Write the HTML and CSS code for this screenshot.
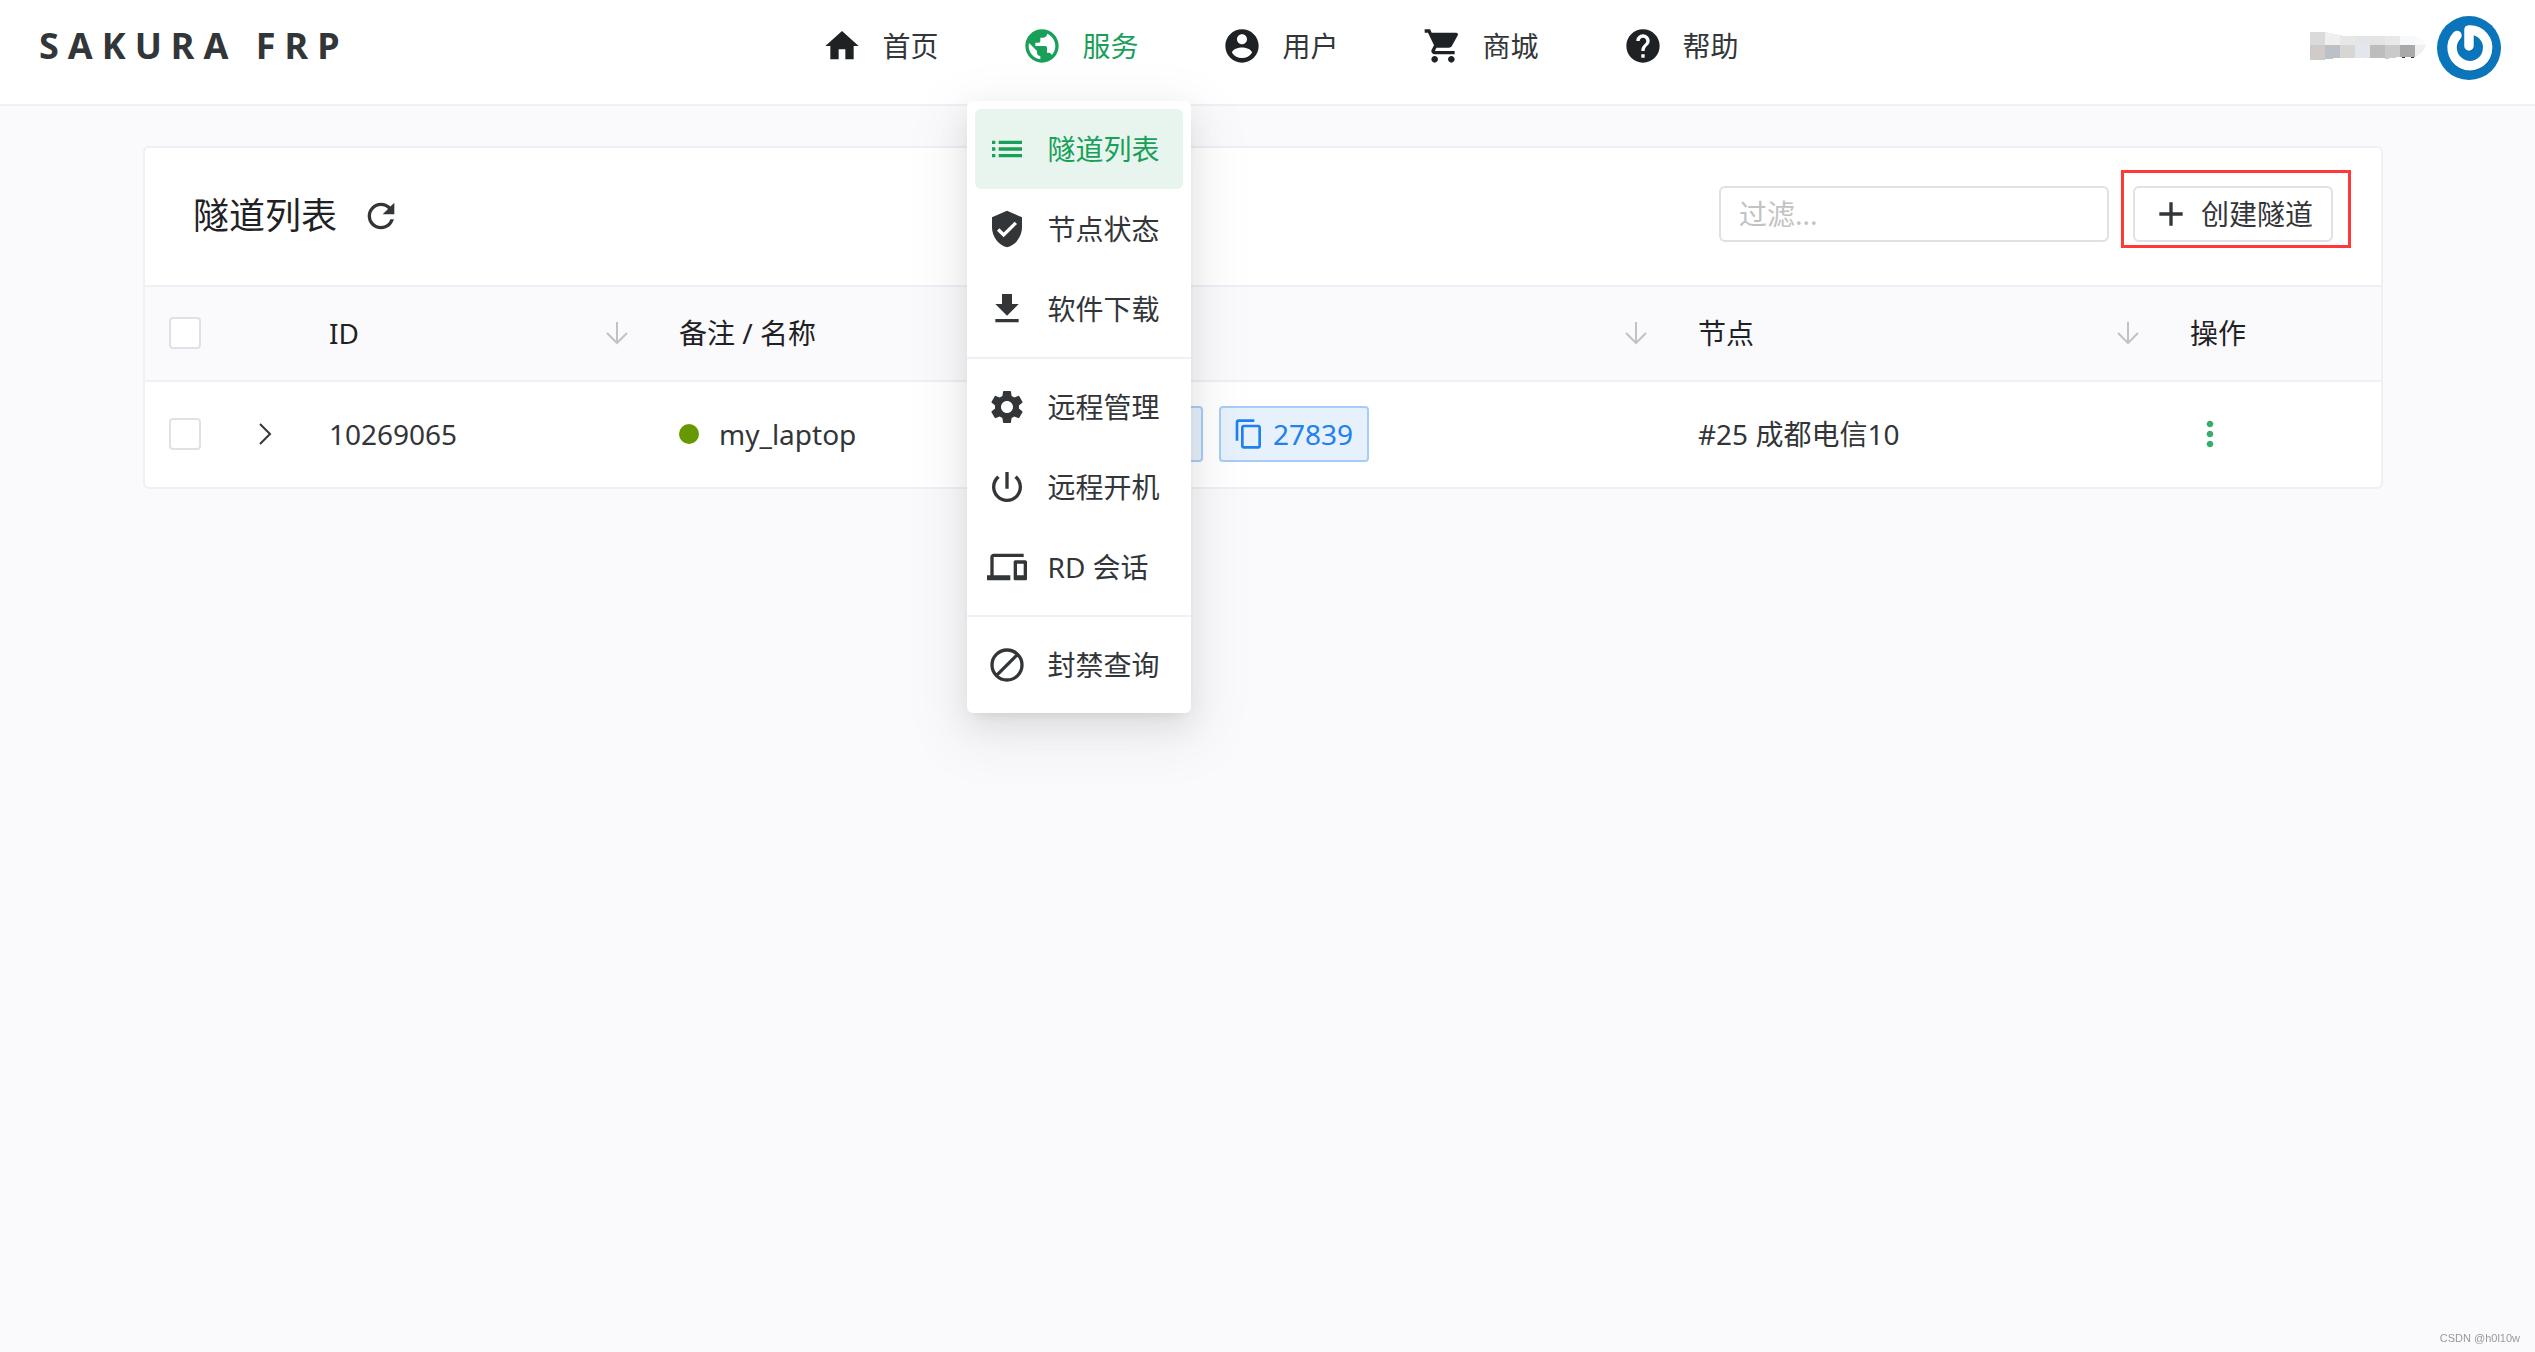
FILE: index.html
```html
<!DOCTYPE html>
<html lang="zh-CN">
<head>
<meta charset="utf-8">
<title>SAKURA FRP</title>
<link rel="stylesheet" href="styles.css">
</head>
<body>
<header class="topbar">
  <a class="brand" href="#">SAKURA FRP</a>
  <nav class="nav">
    <div class="nav-item">
      <a class="nav-link" href="#"><svg class="icon" viewBox="0 0 24 24"><path d="M10 20v-6h4v6h5v-8h3L12 3 2 12h3v8z"/></svg>首页</a>
    </div>
    <div class="nav-item">
      <a class="nav-link active" href="#"><svg class="icon" viewBox="0 0 24 24"><path d="M12 2C6.48 2 2 6.48 2 12s4.48 10 10 10 10-4.48 10-10S17.52 2 12 2zm-1 17.93c-3.95-.49-7-3.85-7-7.93 0-.62.08-1.21.21-1.79L9 15v1c0 1.100.9 2 2 2v1.930zm6.900-2.540c-.26-.81-1-1.390-1.900-1.390h-1v-3c0-.55-.45-1-1-1H8v-2h2c.55 0 1-.45 1-1V7h2c1.100 0 2-.9 2-2v-.41c2.930 1.190 5 4.060 5 7.410 0 2.080-.8 3.970-2.100 5.390z"/></svg>服务</a>
      <div class="menu">
        <a class="menu-item selected" href="#"><svg class="icon" viewBox="0 0 24 24"><path d="M3 13h2v-2H3v2zm0 4h2v-2H3v2zm0-8h2V7H3v2zm4 4h14v-2H7v2zm0 4h14v-2H7v2zM7 7v2h14V7H7z"/></svg>隧道列表</a>
        <a class="menu-item" href="#"><svg class="icon" viewBox="0 0 24 24"><path d="M12 1L3 5v6c0 5.550 3.840 10.740 9 12 5.160-1.260 9-6.450 9-12V5l-9-4zm-2 16l-4-4 1.410-1.410L10 14.170l6.590-6.590L18 9l-8 8z"/></svg>节点状态</a>
        <a class="menu-item" href="#"><svg class="icon" viewBox="0 0 24 24"><path d="M19 9h-4V3H9v6H5l7 7 7-7zM5 18v2h14v-2H5z"/></svg>软件下载</a>
        <hr class="menu-divider">
        <a class="menu-item" href="#"><svg class="icon" viewBox="0 0 24 24"><path d="M19.140 12.940c.04-.3.060-.61.060-.94 0-.32-.02-.64-.07-.94l2.030-1.580c.18-.14.230-.41.120-.61l-1.920-3.320c-.12-.22-.37-.29-.59-.22l-2.390.96c-.5-.38-1.030-.7-1.620-.94l-.36-2.540c-.04-.24-.24-.41-.48-.41h-3.840c-.24 0-.43.17-.47.41l-.36 2.540c-.59.24-1.130.57-1.620.94l-2.390-.96c-.22-.08-.47 0-.59.22L2.740 8.870c-.12.21-.08.47.12.61l2.030 1.580c-.05.3-.09.63-.09.94s.02.64.07.94l-2.030 1.580c-.18.14-.23.41-.12.61l1.920 3.320c.12.22.37.29.59.22l2.390-.96c.5.38 1.030.7 1.620.94l.36 2.540c.05.24.24.41.48.41h3.840c.24 0 .44-.17.47-.41l.36-2.540c.59-.24 1.130-.56 1.620-.94l2.390.96c.22.08.47 0 .59-.22l1.920-3.320c.12-.22.07-.47-.12-.61l-2.010-1.580zM12 15.600c-1.980 0-3.600-1.620-3.600-3.600s1.620-3.600 3.600-3.600 3.600 1.620 3.600 3.600-1.620 3.600-3.600 3.600z"/></svg>远程管理</a>
        <a class="menu-item" href="#"><svg class="icon" viewBox="0 0 24 24"><path d="M13 3h-2v10h2V3zm4.830 2.170l-1.420 1.420C17.990 7.860 19 9.810 19 12c0 3.870-3.130 7-7 7s-7-3.130-7-7c0-2.190 1.010-4.140 2.580-5.420L6.170 5.170C4.230 6.820 3 9.260 3 12c0 4.970 4.030 9 9 9s9-4.030 9-9c0-2.740-1.230-5.180-3.170-6.830z"/></svg>远程开机</a>
        <a class="menu-item" href="#"><svg class="icon" viewBox="0 0 24 24"><path d="M4 6h18V4H4c-1.100 0-2 .9-2 2v11H0v3h14v-3H4V6zm19 2h-6c-.55 0-1 .45-1 1v10c0 .55.45 1 1 1h6c.55 0 1-.45 1-1V9c0-.55-.45-1-1-1zm-1 9h-4v-7h4v7z"/></svg>RD 会话</a>
        <hr class="menu-divider">
        <a class="menu-item" href="#"><svg class="icon" viewBox="0 0 24 24"><path fill="none" stroke="currentColor" stroke-width="2" d="M12 3a9 9 0 1 0 0 18a9 9 0 1 0 0-18zM18.400 5.600L5.600 18.400"/></svg>封禁查询</a>
      </div>
    </div>
    <div class="nav-item">
      <a class="nav-link" href="#"><svg class="icon" viewBox="0 0 24 24"><path d="M12 2C6.480 2 2 6.480 2 12s4.480 10 10 10 10-4.480 10-10S17.520 2 12 2zm0 3c1.660 0 3 1.340 3 3s-1.340 3-3 3-3-1.340-3-3 1.340-3 3-3zm0 14.200c-2.500 0-4.710-1.280-6-3.220.03-1.990 4-3.080 6-3.080 1.990 0 5.970 1.090 6 3.080-1.290 1.940-3.500 3.220-6 3.220z"/></svg>用户</a>
    </div>
    <div class="nav-item">
      <a class="nav-link" href="#"><svg class="icon" viewBox="0 0 24 24"><path d="M7 18c-1.100 0-1.990.9-1.990 2S5.900 22 7 22s2-.9 2-2-.9-2-2-2zM1 2v2h2l3.600 7.590-1.350 2.450c-.16.28-.25.61-.25.96 0 1.100.9 2 2 2h12v-2H7.420c-.14 0-.25-.11-.25-.25l.03-.12.9-1.630h7.450c.75 0 1.410-.41 1.750-1.030l3.580-6.490c.08-.14.12-.31.12-.48 0-.55-.45-1-1-1H5.210l-.94-2H1zm16 16c-1.100 0-1.990.9-1.990 2s.89 2 1.990 2 2-.9 2-2-.9-2-2-2z"/></svg>商城</a>
    </div>
    <div class="nav-item">
      <a class="nav-link" href="#"><svg class="icon" viewBox="0 0 24 24"><path d="M12 2C6.480 2 2 6.480 2 12s4.480 10 10 10 10-4.480 10-10S17.520 2 12 2zm1 17h-2v-2h2v2zm2.070-7.750l-.9.920C13.450 12.900 13 13.500 13 15h-2v-.5c0-1.100.45-2.100 1.170-2.830l1.240-1.260c.37-.36.590-.86.590-1.410 0-1.100-.9-2-2-2s-2 .9-2 2H8c0-2.210 1.790-4 4-4s4 1.790 4 4c0 .88-.36 1.680-.93 2.250z"/></svg>帮助</a>
    </div>
  </nav>
  <div class="user">
    <svg class="user-name" viewBox="0 0 116 28" shape-rendering="crispEdges">
      <path fill="#dadada" d="M0 0h15v13H0z"/><path fill="#efefef" d="M15 0l15 3v10H15z"/><path fill="#e9e7e5" d="M30 3l4 1h11v9H30z"/><path fill="#e4e5e7" d="M45 4h15v9H45z"/><path fill="#e4e4e4" d="M60 4h15v9H60z"/><path fill="#e9e8e8" d="M75 4h15v9H75z"/><path fill="#f7f8fa" d="M90 4h15v9H90z"/><path fill="#fafbfc" d="M105 4q8 2 10 9h-10z"/>
      <path fill="#d0cbc8" d="M0 13h15v15H0z"/><path fill="#bcc0c7" d="M15 13h15v13l-15 1z"/><path fill="#d8d6d2" d="M30 13h15v13H30z"/><path fill="#e3e7ed" d="M45 13h15v13H45z"/><path fill="#bdbdbd" d="M60 13h15v13H60z"/><path fill="#cacaca" d="M75 13h15v12l-15 2z"/><path fill="#a9a9a9" d="M90 13h15v12H90z"/><path fill="#edf1f4" d="M105 13h11q-2 8-11 12z"/>
      <path fill="#333639" d="M92 25h3v1h-3zM101 25h3v1h-3z"/>
    </svg>
    <svg class="avatar" viewBox="0 0 64 64">
      <circle cx="32" cy="32" r="32" fill="#0a75ba"/>
      <g fill="none" stroke-linecap="round" stroke-linejoin="round">
        <path stroke="#075a92" stroke-opacity=".5" stroke-width="9.500" d="M20 19.500A17.800 17.800 0 1 0 32 14V30" transform="translate(.7 .8)"/>
        <path stroke="#fff" stroke-width="9.500" d="M20 19.500A17.800 17.800 0 1 0 32 14V30"/>
      </g>
    </svg>
  </div>
</header>

<main class="page">
  <section class="card">
    <div class="card-head">
      <h1 class="title">隧道列表</h1>
      <button class="refresh" type="button" aria-label="刷新"><svg class="icon" viewBox="0 0 24 24"><path d="M17.650 6.350A7.958 7.958 0 0 0 12 4c-4.420 0-7.990 3.580-7.990 8s3.570 8 7.990 8c3.730 0 6.840-2.550 7.730-6h-2.080A5.990 5.990 0 0 1 12 18c-3.310 0-6-2.690-6-6s2.690-6 6-6c1.660 0 3.140.69 4.220 1.780L13 11h7V4l-2.350 2.350z"/></svg></button>
      <div class="tools">
        <input class="filter" type="text" placeholder="过滤..." aria-label="过滤">
        <div class="create-wrap">
          <button class="create" type="button"><svg class="icon" viewBox="0 0 24 24"><path d="M19 13h-6v6h-2v-6H5v-2h6V5h2v6h6v2z"/></svg>创建隧道</button>
        </div>
      </div>
    </div>
    <table class="table">
      <colgroup>
        <col class="col-mini"><col class="col-mini"><col class="col-text"><col class="col-text"><col><col class="col-node"><col class="col-action">
      </colgroup>
      <thead>
        <tr>
          <th class="center"><input class="check" type="checkbox" aria-label="全选"></th>
          <th></th>
          <th><div class="sortable">ID<svg class="sort" viewBox="0 0 24 24"><path d="M12 1v21M2 12l10 10 10-10"/></svg></div></th>
          <th>备注 / 名称</th>
          <th><div class="sortable end"><svg class="sort" viewBox="0 0 24 24"><path d="M12 1v21M2 12l10 10 10-10"/></svg></div></th>
          <th><div class="sortable">节点<svg class="sort" viewBox="0 0 24 24"><path d="M12 1v21M2 12l10 10 10-10"/></svg></div></th>
          <th>操作</th>
        </tr>
      </thead>
      <tbody>
        <tr>
          <td class="center"><input class="check" type="checkbox" aria-label="10269065"></td>
          <td class="center"><button class="expand" type="button" aria-label="展开"><svg class="chevron" viewBox="0 0 24 24"><path d="M7 2l10 10L7 22"/></svg></button></td>
          <td>10269065</td>
          <td><div class="name"><span class="dot"></span>my_laptop</div></td>
          <td><div class="tags"><span class="tag tag-link"></span><span class="tag"><svg class="copy" viewBox="0 0 24 24"><path d="M16 1H4c-1.100 0-2 .9-2 2v14h2V3h12V1zm3 4H8c-1.100 0-2 .9-2 2v14c0 1.100.9 2 2 2h11c1.100 0 2-.9 2-2V7c0-1.100-.9-2-2-2zm0 16H8V7h11v14z"/></svg>27839</span></div></td>
          <td>#25 成都电信10</td>
          <td><button class="more" type="button" aria-label="操作"><svg class="icon" viewBox="0 0 24 24"><path d="M12 8c1.100 0 2-.9 2-2s-.9-2-2-2-2 .9-2 2 .9 2 2 2zm0 2c-1.100 0-2 .9-2 2s.9 2 2 2 2-.9 2-2-.9-2-2-2zm0 6c-1.100 0-2 .9-2 2s.9 2 2 2 2-.9 2-2-.9-2-2-2z"/></svg></button></td>
        </tr>
      </tbody>
    </table>
  </section>
</main>
<div class="watermark">CSDN @h0l10w</div>
</body>
</html>
```

FILE: styles.css
```css
* {
  box-sizing: border-box;
}

body {
  margin: 0;
  min-height: 100vh;
  background: #fafafc;
  color: #333639;
  font-family: "Noto Sans", "Noto Sans CJK SC", sans-serif;
  font-size: 28px;
  line-height: 44px;
}

a {
  color: inherit;
  text-decoration: none;
}

button {
  padding: 0;
  border: 0;
  background: none;
  color: inherit;
  font: inherit;
  cursor: pointer;
}

.icon {
  flex: none;
  display: block;
  width: 40px;
  height: 40px;
  fill: currentColor;
}

/* Top bar */

.topbar {
  display: grid;
  grid-template-columns: 1fr auto 1fr;
  align-items: start;
  padding: 16px 34px 24px 39px;
  border-bottom: 2px solid #efeff5;
  background: #fff;
}

.brand {
  font-size: 36px;
  font-weight: 700;
  line-height: 60px;
  letter-spacing: 9px;
  white-space: nowrap;
}

.nav {
  display: flex;
  gap: 84px;
  padding: 8px 0 0 21px;
}

.nav-item {
  position: relative;
}

.nav-link {
  display: flex;
  align-items: center;
  gap: 20px;
  white-space: nowrap;
}

.nav-link .icon {
  color: #1f2225;
}

.nav-link.active,
.nav-link.active .icon {
  color: #18a058;
}

.menu {
  position: absolute;
  z-index: 10;
  top: 77px;
  left: -55px;
  width: 224px;
  padding: 8px 0;
  border-radius: 6px;
  background: #fff;
  box-shadow: 0 6px 12px -8px rgba(0, 0, 0, .12), 0 12px 32px 0 rgba(0, 0, 0, .08), 0 18px 56px 16px rgba(0, 0, 0, .05);
}

.menu-item {
  display: flex;
  align-items: center;
  gap: 20px;
  height: 80px;
  margin: 0 8px;
  padding: 0 12px;
  border-radius: 6px;
  white-space: nowrap;
}

.menu-item.selected {
  background: #e7f5ee;
  color: #18a058;
}

.menu-divider {
  height: 2px;
  margin: 8px 0;
  border: 0;
  background: #efeff5;
}

.user {
  display: flex;
  align-items: center;
  justify-content: flex-end;
  gap: 11px;
}

.user-name {
  width: 116px;
  height: 28px;
  margin-bottom: 4px;
}

.avatar {
  width: 64px;
  height: 64px;
}

/* Tunnel list */

.page {
  padding: 40px 152px 40px 143px;
}

.card {
  border: 2px solid #efeff5;
  border-radius: 6px;
  background: #fff;
}

.card-head {
  display: flex;
  align-items: flex-start;
  padding: 38px 48px 39px;
}

.title {
  margin: 0;
  color: #1f2225;
  font-size: 36px;
  font-weight: 400;
  line-height: 60px;
}

.refresh {
  margin: 10px 0 0 24px;
}

.tools {
  display: flex;
  gap: 24px;
  margin-left: auto;
}

.filter {
  width: 390px;
  height: 56px;
  padding: 0 18px;
  border: 2px solid #e0e0e6;
  border-radius: 6px;
  background: #fff;
  color: inherit;
  font: inherit;
}

.filter::placeholder {
  color: #c2c2c2;
}

.create-wrap {
  position: relative;
}

.create-wrap::after {
  content: "";
  position: absolute;
  inset: -16px -18px -6px -12px;
  border: 3px solid #ff3838;
  pointer-events: none;
}

.create {
  display: flex;
  align-items: center;
  gap: 10px;
  height: 56px;
  padding: 0 18px 0 16px;
  border: 2px solid #e0e0e6;
  border-radius: 6px;
  white-space: nowrap;
}

.table {
  width: 100%;
  table-layout: fixed;
  border-collapse: separate;
  border-spacing: 0;
}

.col-mini {
  width: 80px;
}

.col-text {
  width: 350px;
}

.col-node {
  width: 492px;
}

.col-action {
  width: 215px;
}

.table th {
  height: 97px;
  padding: 0 24px 2px;
  border-top: 2px solid #efeff5;
  border-bottom: 2px solid #efeff5;
  background: #fafafc;
  color: #1f2225;
  font-weight: 400;
  text-align: left;
}

.table td {
  height: 105px;
  padding: 0 24px 2px;
}

.table .center {
  padding: 0 0 2px;
  text-align: center;
}

.check {
  appearance: none;
  display: block;
  width: 32px;
  height: 32px;
  margin: 0 auto;
  border: 2px solid #e0e0e6;
  border-radius: 4px;
  background: #fff;
}

.sortable {
  display: flex;
  align-items: center;
  justify-content: space-between;
}

.sortable.end {
  justify-content: flex-end;
}

.sort {
  width: 24px;
  height: 24px;
  margin-right: 2px;
  fill: none;
  stroke: #c2c2c2;
  stroke-width: 2;
}

.expand {
  display: block;
  margin: 0 auto;
}

.chevron {
  display: block;
  width: 24px;
  height: 24px;
  fill: none;
  stroke: currentColor;
  stroke-width: 2;
}

.name {
  display: flex;
  align-items: center;
  gap: 20px;
}

.dot {
  width: 20px;
  height: 20px;
  border-radius: 50%;
  background: #690;
}

.tags {
  display: flex;
  gap: 16px;
}

.tag {
  display: flex;
  align-items: center;
  gap: 8px;
  height: 56px;
  padding: 0 14px 0 12px;
  border: 2px solid #a6cdf9;
  border-radius: 4px;
  background: #e7f1fc;
  color: #2080f0;
}

.tag-link {
  width: 174px;
}

.copy {
  width: 32px;
  height: 32px;
  fill: currentColor;
}

.more {
  display: block;
  color: #36ad6a;
}

.watermark {
  position: fixed;
  right: 15px;
  bottom: 4px;
  color: #999;
  font: 11px/20px "Liberation Sans", sans-serif;
}
```
